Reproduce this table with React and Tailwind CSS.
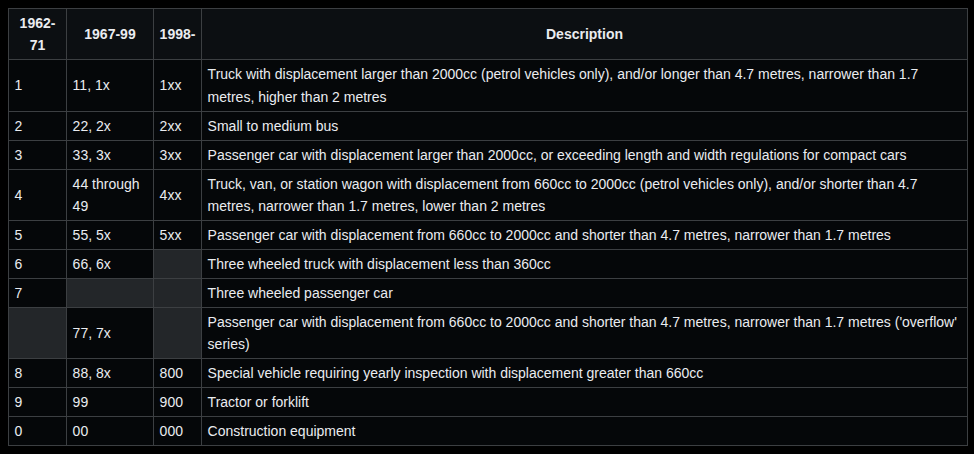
export default function App() {
  const rows = [
    ["1", "11, 1x", "1xx", "Truck with displacement larger than 2000cc (petrol vehicles only), and/or longer than 4.7 metres, narrower than 1.7 metres, higher than 2 metres"],
    ["2", "22, 2x", "2xx", "Small to medium bus"],
    ["3", "33, 3x", "3xx", "Passenger car with displacement larger than 2000cc, or exceeding length and width regulations for compact cars"],
    ["4", "44 through 49", "4xx", "Truck, van, or station wagon with displacement from 660cc to 2000cc (petrol vehicles only), and/or shorter than 4.7 metres, narrower than 1.7 metres, lower than 2 metres"],
    ["5", "55, 5x", "5xx", "Passenger car with displacement from 660cc to 2000cc and shorter than 4.7 metres, narrower than 1.7 metres"],
    ["6", "66, 6x", null, "Three wheeled truck with displacement less than 360cc"],
    ["7", null, null, "Three wheeled passenger car"],
    [null, "77, 7x", null, "Passenger car with displacement from 660cc to 2000cc and shorter than 4.7 metres, narrower than 1.7 metres ('overflow' series)"],
    ["8", "88, 8x", "800", "Special vehicle requiring yearly inspection with displacement greater than 660cc"],
    ["9", "99", "900", "Tractor or forklift"],
    ["0", "00", "000", "Construction equipment"],
  ];
  const th = "border border-[#3c3f42] bg-[#0c0f12] font-bold text-center px-[0.4em] py-[0.2em]";
  const td = "border border-[#3c3f42] px-[0.4em] py-[0.2em] align-middle";
  return (
    <div className="min-h-[454px] bg-black p-2 text-[#eaecf0] text-[14px] leading-[1.6]" style={{ fontFamily: '"Liberation Sans", Arial, sans-serif' }}>
      <table className="w-[960px] border-collapse bg-[#050709] table-fixed">
        <colgroup>
          <col className="w-[58px]" />
          <col className="w-[87px]" />
          <col className="w-[48px]" />
          <col />
        </colgroup>
        <thead>
          <tr>
            <th className={th}>1962-71</th>
            <th className={th}>1967-99</th>
            <th className={th}>1998-</th>
            <th className={th}>Description</th>
          </tr>
        </thead>
        <tbody>
          {rows.map((r, i) => (
            <tr key={i}>
              {r.map((c, j) =>
                c === null ? (
                  <td key={j} className={td + " bg-[#232629]"}></td>
                ) : (
                  <td key={j} className={td}>{c}</td>
                )
              )}
            </tr>
          ))}
        </tbody>
      </table>
    </div>
  );
}
